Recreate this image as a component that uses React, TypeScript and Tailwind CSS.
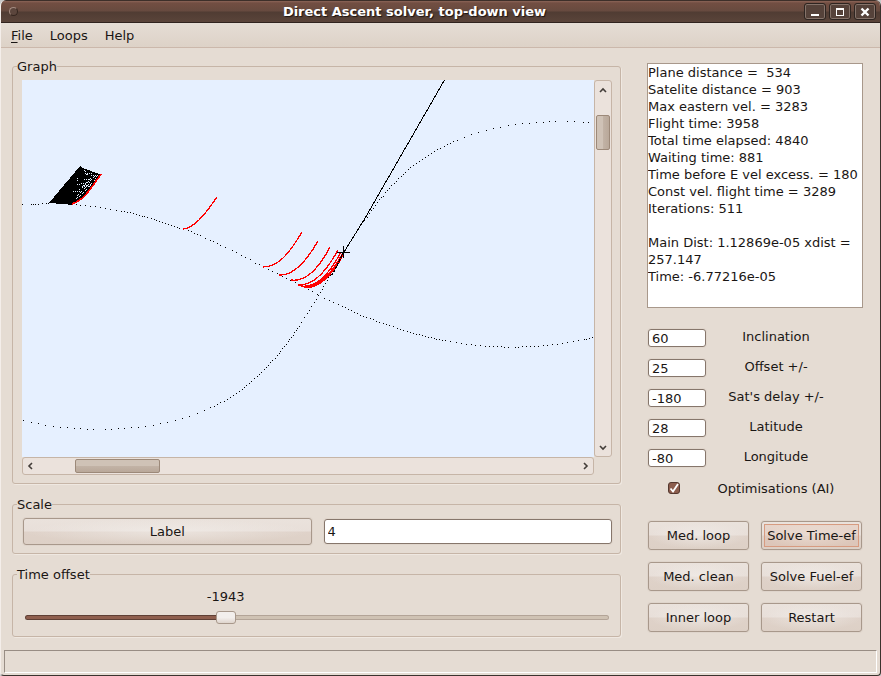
import { useState } from "react";
import type { ReactNode } from "react";

const LOG = `Plane distance =  534
Satelite distance = 903
Max eastern vel. = 3283
Flight time: 3958
Total time elapsed: 4840
Waiting time: 881
Time before E vel excess. = 180
Const vel. flight time = 3289
Iterations: 511

Main Dist: 1.12869e-05 xdist = 257.147
Time: -6.77216e-05`;

const FIELDS = [
  { id: "inclination", label: "Inclination", value: "60" },
  { id: "offset", label: "Offset +/-", value: "25" },
  { id: "delay", label: "Sat's delay +/-", value: "-180" },
  { id: "latitude", label: "Latitude", value: "28" },
  { id: "longitude", label: "Longitude", value: "-80" },
];

const ACTIONS = [
  "Med. loop",
  "Solve Time-ef",
  "Med. clean",
  "Solve Fuel-ef",
  "Inner loop",
  "Restart",
];

// ground tracks, one dot per sample
const SATELLITE_TRACK =
  "1,340 9,342 16,343 23,345 31,346 38,347 45,347 52,348 58,348 65,349 71,349 83,349 89,349 96,348 102,348 109,347 116,347 123,346 131,345 138,343 145,342 153,340 160,338 167,336 175,333 182,330 188,327 192,326 195,324 198,322 202,321 205,319 208,317 211,315 214,313 217,311 220,309 222,307 224,305 227,303 229,301 232,298 235,296 237,294 239,292 242,289 244,287 246,285 248,282 250,280 253,278 255,275 257,273 258,271 260,268 262,266 264,264 266,261 267,259 269,257 271,255 272,252 274,250 275,248 277,246 279,242 282,237 285,233 287,230 289,226 292,222 294,219 296,215 298,212 300,209 301,206 303,203 305,200 306,197 308,195 342,140 345,137 347,133 349,130 351,128 353,125 355,122 357,119 359,117 361,116 363,112 365,110 367,108 369,105 372,103 374,101 376,98 379,96 381,94 383,92 386,89 388,87 391,85 394,83 397,81 400,79 403,77 406,75 409,73 412,71 415,69 418,68 422,66 425,64 428,63 431,61 435,60 442,57 449,54 456,52 464,50 471,48 478,47 486,45 493,44 500,43 507,43 514,42 521,42 527,41 533,41 545,41 552,41 561,42 566,42";

const PLANE_TRACK =
  "0,124 9,124 11,124 13,124 16,124 20,123 24,123 26,123 54,124 58,125 63,125 68,126 73,126 78,127 83,128 88,129 94,130 99,131 102,131 105,132 108,132 111,133 114,134 117,135 120,136 122,136 125,137 129,138 132,139 134,140 137,141 140,142 143,143 146,144 149,145 152,146 155,147 157,148 161,149 166,150 169,151 172,153 175,154 178,155 183,158 188,160 191,161 195,163 198,165 203,167 210,170 214,172 219,175 223,177 228,179 233,183 237,184 241,186 246,189 250,191 255,193 260,196 264,198 268,200 273,202 277,204 286,209 290,211 295,214 302,218 307,220 311,222 316,224 320,226 323,227 326,229 329,230 332,232 335,233 338,235 341,236 344,237 348,238 351,239 354,241 357,242 361,243 364,244 367,245 371,246 375,248 378,249 381,250 385,251 388,252 391,253 394,254 397,254 400,255 403,256 406,257 409,257 412,258 414,259 417,259 420,260 423,260 428,261 434,262 439,263 444,264 449,264 453,265 458,265 463,266 467,266 471,266 475,266 479,266 482,267 486,267 493,267 496,267 500,266 504,266 508,266 512,266 516,266 521,265 525,265 530,264 535,264 540,263 545,262 551,261 556,260 562,259 564,259 567,258 570,257";

const ASCENTS = [
  "M161 149C172 148 182 136 195 117",
  "M241 187C256 187 267 174 280 152",
  "M257 195C271 196 284 182 296 161",
  "M269 200C283 202 296 190 308 167",
  "M276 205C290 206 303 194 316 170",
  "M279 206C293 208 306 197 319 172",
];

const Track = ({ points }: { points: string }) => (
  <g>
    {points.split(" ").map((p) => {
      const [x, y] = p.split(",");
      return <rect key={p} x={x} y={y} width="1" height="1" />;
    })}
  </g>
);

const Graph = () => (
  <svg
    viewBox="0 0 572 377"
    preserveAspectRatio="xMinYMin slice"
    shapeRendering="crispEdges"
    className="block h-[377px] w-full bg-[#e6f0ff]"
    role="img"
    aria-label="Ground tracks"
  >
    <Track points={PLANE_TRACK} />
    <Track points={SATELLITE_TRACK} />

    {/* rejected ascents, packed together */}
    <path d="M27 123L58 86L61 88L77 94L79 95L66 112L56 121L50 125L41 124Z" />
    <g fill="none" stroke="#e6f0ff" strokeDasharray="1 1">
      <path d="M54 119Q65 111 76 95" />
      <path d="M55 116Q65 107 73 95" />
      <path d="M51 111H58M55 105L62 103M60 106H67" />
      <path d="M55 98V102M62 99Q66 101 70 98M63 93H70M69 95H77" />
      <path d="M57 110Q64 104 69 98M63 93L66 95M62 90L64 92" />
    </g>
    <path d="M50 124Q59 121 66 112T79 94" fill="none" stroke="#f00" strokeWidth="1.6" />

    <g fill="none" stroke="#f00">
      {ASCENTS.map((d) => (
        <path key={d} d={d} strokeWidth="1.3" />
      ))}
      <path d="M282 207C296 208 309 196 321 174" strokeWidth="2.6" />
    </g>

    <path d="M422.5 0L342.5 139L322 172" fill="none" stroke="#000" />
    <path d="M322 172L310 195" fill="none" stroke="#000" strokeWidth="1.4" strokeDasharray="3 1" />
    <path d="M315 172.5H328M321.5 166V178" fill="none" stroke="#000" />
  </svg>
);

const Chevron = ({ d }: { d: string }) => (
  <svg viewBox="0 0 8 8" className="size-2" fill="none" stroke="#433d39" strokeWidth="1.6">
    <path d={d} />
  </svg>
);

const GroupBox = ({ title, children }: { title: string; children: ReactNode }) => (
  <fieldset className="min-w-0 rounded-[3px] border border-[#c6b5a7] pt-[5px] pr-2 pb-2 pl-[9px] shadow-[1px_1px_0_#efe8e1]">
    <legend className="-ml-[5px] leading-[17px]">{title}</legend>
    {children}
  </fieldset>
);

const buttonClass =
  "rounded-[3px] border border-[#a8988b] bg-[radial-gradient(ellipse_at_center,#f4f1ee90,#f4f1ee00_70%),linear-gradient(#eae2dc_0%,#e8dfd9_48%,#dfd2c9_52%,#ddd0c6_100%)] shadow-[0_0_0_1px_#dfd5cc] whitespace-nowrap";

const inputClass =
  "min-w-0 rounded-[3px] border border-[#86766b] bg-white px-[3px] shadow-[0_0_0_1px_#e0d6cc] focus:outline-none";

const windowButton =
  "flex h-[17px] w-[22px] items-center justify-center rounded-[3px] border border-[#2e2521] bg-[#55423a] shadow-[inset_0_0_0_1px_#85736a]";

export default function App() {
  const [scale, setScale] = useState("4");
  const [offset, setOffset] = useState(-1943);
  const [values, setValues] = useState(FIELDS.map((f) => f.value));
  const [optimise, setOptimise] = useState(true);

  const min = -5000;
  const max = 4040;
  const ratio = (offset - min) / (max - min);
  const thumbCentre = `calc(10px + (100% - 20px) * ${ratio})`;
  const stop = `${ratio * 100}%`;

  return (
    <div className="bg-[#c9c9c9]">
      <div className="overflow-hidden rounded-t-[6px] rounded-b-[4px] border-r border-b border-l border-r-[#3b332e] border-b-[#3b332e] border-l-[#f4eeea] bg-[#e5dcd3] font-['DejaVu_Sans',sans-serif] text-[13px] leading-[17px] text-[#1a1614]">
        {/* Title bar */}
        <header className="flex h-[23px] items-center border-t border-b border-t-[#3d2f29] border-b-[#30231e] bg-[linear-gradient(#8b6557_0px,#724e42_2px,#674a3f_10px,#503c33_11px,#5a443a_100%)] px-1">
          <div className="flex w-5 pl-1">
            <button
              aria-label="Window menu"
              className="size-[9px] rounded-full border border-[#35261f] border-t-[#a48b80] border-l-[#a48b80] bg-[#5c463d]"
            />
          </div>
          <h1 className="flex-1 pb-px text-center font-bold whitespace-nowrap text-white [text-shadow:1px_1px_1px_#1c1411]">
            Direct Ascent solver, top-down view
          </h1>
          <div className="flex w-[72px] gap-[3px]">
            <button aria-label="Minimize" className={windowButton}>
              <svg viewBox="0 0 12 12" className="size-3" fill="#fff" shapeRendering="crispEdges">
                <path d="M2 8h8v2H2z" />
              </svg>
            </button>
            <button aria-label="Maximize" className={windowButton}>
              <svg viewBox="0 0 12 12" className="size-3" fill="#fff" shapeRendering="crispEdges">
                <path fillRule="evenodd" d="M2 2h8v8H2zM3 4v5h6V4z" />
              </svg>
            </button>
            <button aria-label="Close" className={windowButton}>
              <svg viewBox="0 0 12 12" className="size-3" stroke="#fff" strokeWidth="2.4">
                <path d="M2.5 2.5l7 7M9.5 2.5l-7 7" />
              </svg>
            </button>
          </div>
        </header>

        <nav className="flex h-[25px] items-center gap-[17px] border-b border-[#cbb8ab] bg-[linear-gradient(#e5ddd5,#ddd2c7)] px-[10px]">
          <button>
            <span className="underline underline-offset-2">F</span>ile
          </button>
          <button>Loops</button>
          <button>Help</button>
        </nav>

        <main className="flex gap-[26px] pt-[10px] pr-[17px] pb-[13px] pl-[11px]">
          {/* Left column */}
          <div className="flex min-w-0 flex-1 flex-col gap-3">
            <GroupBox title="Graph">
              <div className="grid grid-cols-[1fr_18px]">
                <Graph />
                <div className="flex flex-col items-center rounded-[3px] border border-[#c6b5a7] bg-[#ebe2dc]">
                  <button aria-label="Scroll up" className="flex h-[17px] items-center">
                    <Chevron d="M1 6L4 3L7 6" />
                  </button>
                  <div className="w-[14px] flex-1 pt-[17px]">
                    <div className="h-[35px] rounded-[2px] border border-[#9c8979] bg-[linear-gradient(90deg,#cfc2b6_50%,#c2b3a6_50%,#b9a899)]" />
                  </div>
                  <button aria-label="Scroll down" className="flex h-[17px] items-center">
                    <Chevron d="M1 2L4 5L7 2" />
                  </button>
                </div>
                <div className="flex h-[18px] items-center rounded-[3px] border border-[#c6b5a7] bg-[#ebe2dc]">
                  <button aria-label="Scroll left" className="flex w-4 justify-center">
                    <Chevron d="M5 1L2 4L5 7" />
                  </button>
                  <div className="flex-1 pl-9">
                    <div className="h-[14px] w-[85px] rounded-[2px] border border-[#9c8979] bg-[linear-gradient(#cfc2b6_50%,#c2b3a6_50%,#b9a899)]" />
                  </div>
                  <button aria-label="Scroll right" className="flex w-[17px] justify-center">
                    <Chevron d="M3 1L6 4L3 7" />
                  </button>
                </div>
              </div>
            </GroupBox>

            <GroupBox title="Scale">
              <div className="grid grid-cols-2 items-center gap-3 pl-px">
                <button id="scale-label" className={`${buttonClass} h-[27px]`}>
                  Label
                </button>
                <input
                  aria-labelledby="scale-label"
                  value={scale}
                  onChange={(e) => setScale(e.target.value)}
                  className={`${inputClass} h-[25px]`}
                />
              </div>
            </GroupBox>

            <GroupBox title="Time offset">
              <div className="px-[3px] pb-1">
                <output
                  htmlFor="time-offset"
                  className="flex w-0 justify-center whitespace-nowrap"
                  style={{ marginLeft: thumbCentre }}
                >
                  {offset}
                </output>
                <input
                  id="time-offset"
                  type="range"
                  aria-label="Time offset"
                  min={min}
                  max={max}
                  value={offset}
                  onChange={(e) => setOffset(Number(e.target.value))}
                  className="mt-[10px] mb-1 block h-[5px] w-full appearance-none rounded-[3px] border border-transparent focus:outline-none [&::-webkit-slider-thumb]:h-[13px] [&::-webkit-slider-thumb]:w-5 [&::-webkit-slider-thumb]:appearance-none [&::-webkit-slider-thumb]:rounded-[3px] [&::-webkit-slider-thumb]:border [&::-webkit-slider-thumb]:border-[#a8988b] [&::-webkit-slider-thumb]:bg-[linear-gradient(#f3efec_50%,#dfd5cd)]"
                  style={{
                    background: `linear-gradient(90deg, #8f5f4e ${stop}, #cfc2b3 ${stop}) padding-box, linear-gradient(90deg, #5f4035 ${stop}, #b3a497 ${stop}) border-box`,
                  }}
                />
              </div>
            </GroupBox>
          </div>

          {/* Right column */}
          <div className="flex w-[216px] shrink-0 flex-col pt-[5px]">
            <textarea
              readOnly
              aria-label="Solver output"
              value={LOG}
              className="block h-[245px] resize-none overflow-hidden border border-[#a8988b] bg-white focus:outline-none"
            />

            <div className="mt-[21px] flex flex-col gap-3 px-px">
              {FIELDS.map((field, i) => (
                <div key={field.id} className="flex h-[18px] items-start gap-[6px]">
                  <input
                    id={field.id}
                    value={values[i]}
                    onChange={(e) =>
                      setValues(values.map((v, j) => (j === i ? e.target.value : v)))
                    }
                    className={`${inputClass} h-[18px] w-[58px]`}
                  />
                  <label htmlFor={field.id} className="w-32 text-center leading-4">
                    {field.label}
                  </label>
                </div>
              ))}
              <div className="flex h-[18px] items-center gap-[6px]">
                <div className="flex w-[58px] pl-5">
                  <input
                    id="optimise"
                    type="checkbox"
                    checked={optimise}
                    onChange={(e) => setOptimise(e.target.checked)}
                    className="peer size-3 appearance-none rounded-[3px] border border-[#54382e] bg-white checked:bg-[#8c5d4d]"
                  />
                  <svg
                    viewBox="0 0 12 12"
                    className="pointer-events-none -ml-3 hidden size-3 peer-checked:block"
                    fill="none"
                    stroke="#fff"
                    strokeWidth="1.8"
                  >
                    <path d="M2.5 6.5L5 9.5L10 2" />
                  </svg>
                </div>
                <label htmlFor="optimise" className="w-32 text-center whitespace-nowrap">
                  Optimisations (AI)
                </label>
              </div>
            </div>

            <div className="mt-6 grid grid-cols-2 gap-3 px-px">
              {ACTIONS.map((name) => (
                <button
                  key={name}
                  className={
                    name === "Solve Time-ef"
                      ? `${buttonClass} flex h-[29px] p-[2px]`
                      : `${buttonClass} h-[29px]`
                  }
                >
                  {name === "Solve Time-ef" ? (
                    <span className="flex h-full w-full items-center justify-center border border-[#d79b80] bg-[#d98c6a26]">
                      {name}
                    </span>
                  ) : (
                    name
                  )}
                </button>
              ))}
            </div>
          </div>
        </main>

        {/* Status bar */}
        <footer className="mx-[3px] mb-[2px] h-[23px] border border-t-[#988d84] border-r-white border-b-white border-l-[#988d84]" />
      </div>
    </div>
  );
}
